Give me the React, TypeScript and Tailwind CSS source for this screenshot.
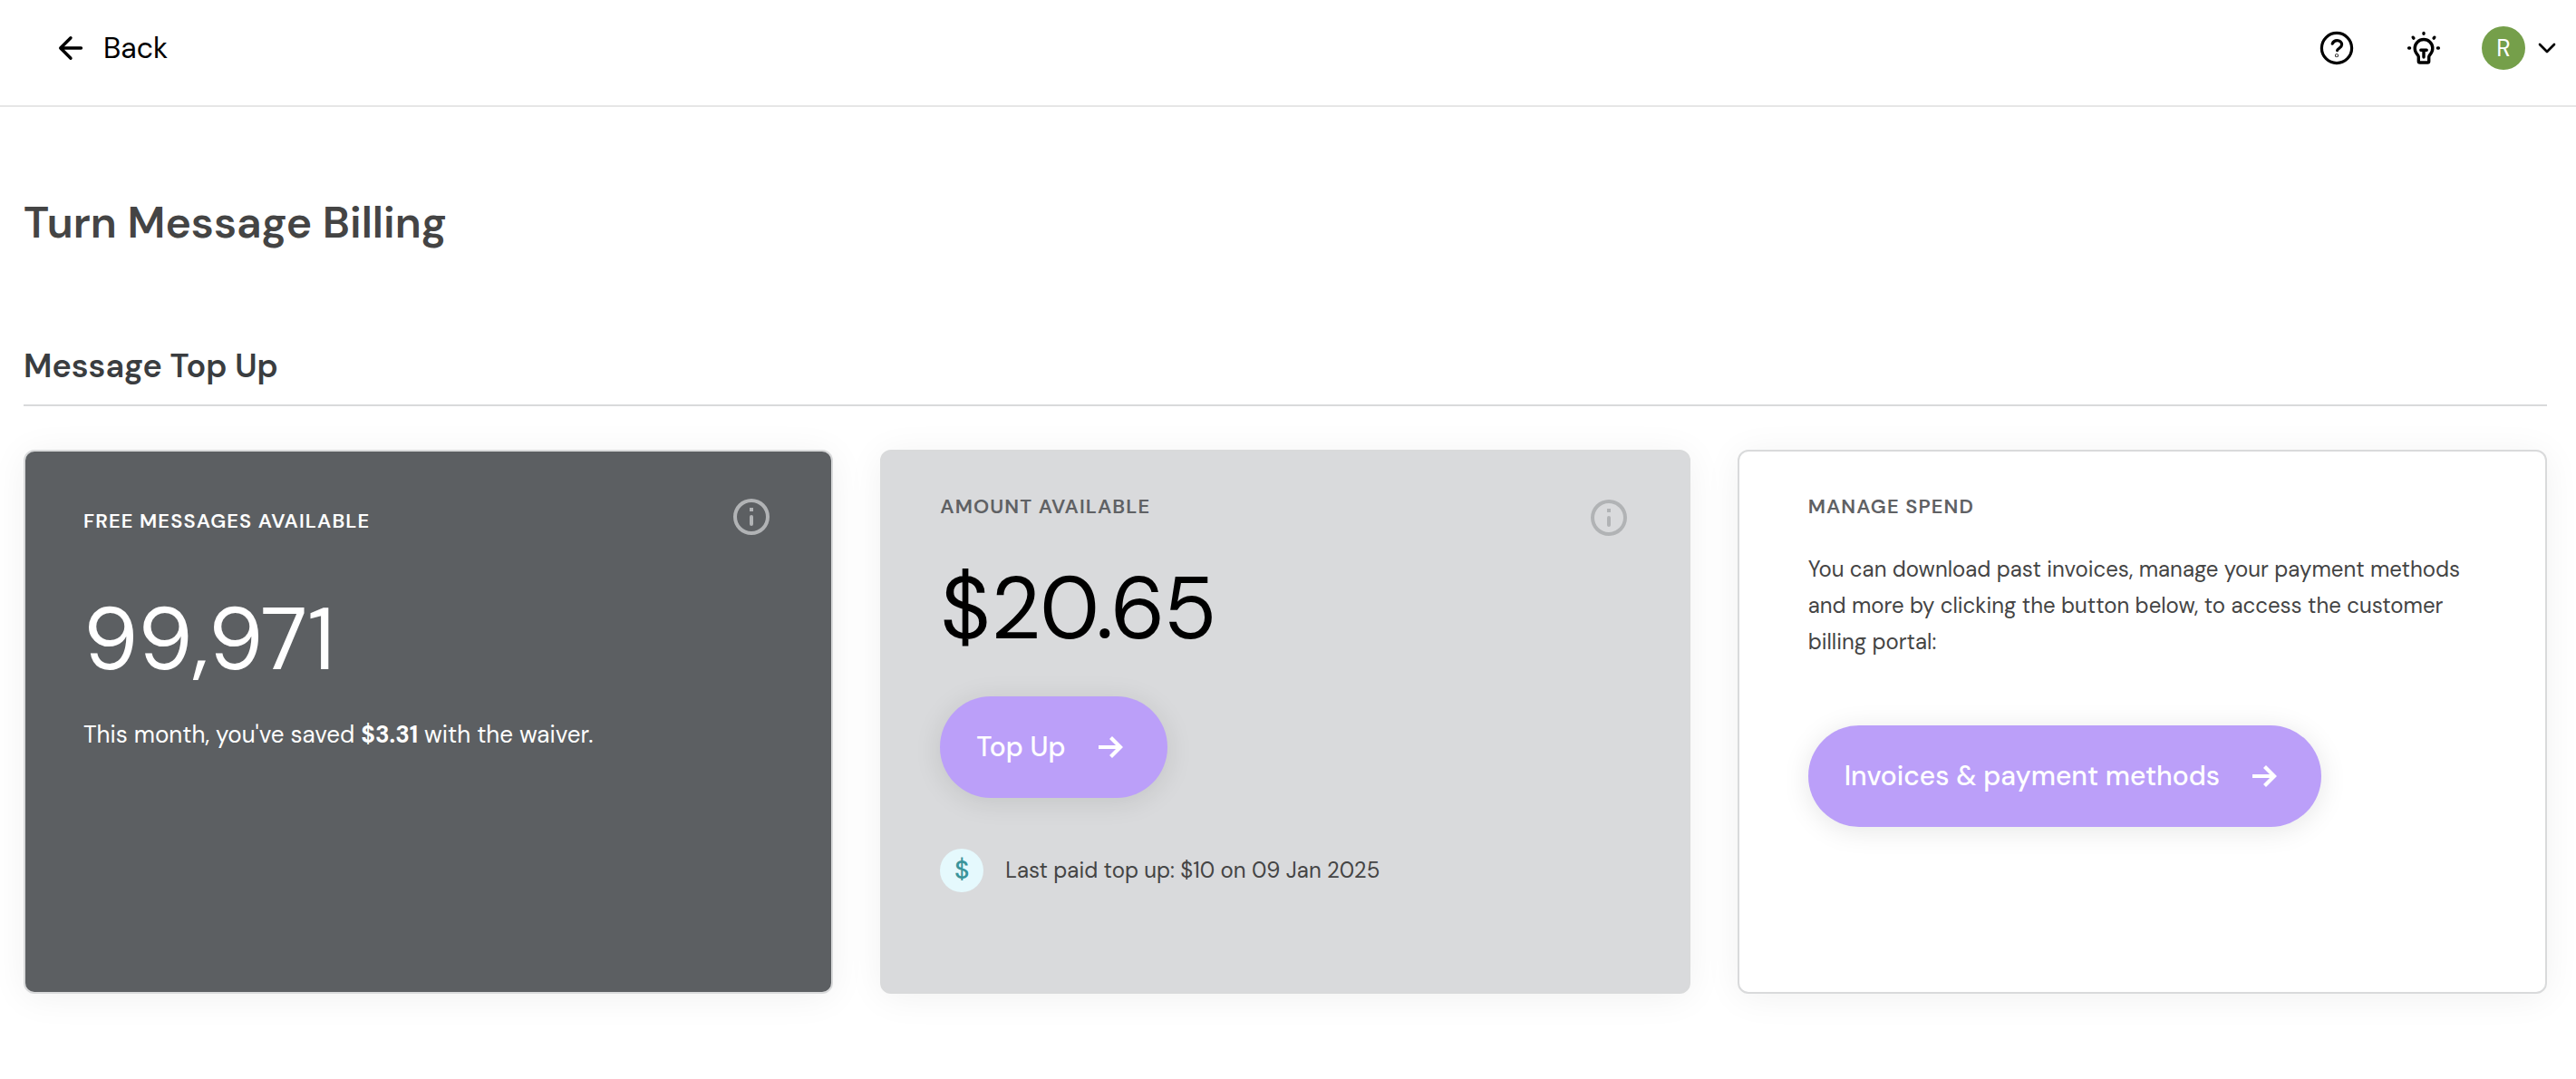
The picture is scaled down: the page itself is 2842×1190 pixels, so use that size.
import { ReactNode } from "react";
import { ChevronDown } from "lucide-react";

function BackIcon() {
  return (
    <svg viewBox="0 0 40 40" className="size-10" fill="none" stroke="currentColor" strokeWidth="3.4" strokeLinecap="round" strokeLinejoin="round">
      <path d="M31.500 20H9M20 8.700 8.700 20 20 31.300" />
    </svg>
  );
}

function HelpIcon() {
  return (
    <svg viewBox="0 0 40 40" className="size-10" fill="none" stroke="currentColor" strokeWidth="3.2" strokeLinecap="round" strokeLinejoin="round">
      <circle cx="20" cy="20" r="16.6" />
      <path d="M15.200 15.200c.9-2.400 2.800-3.600 5.200-3.600 3 0 5.200 2 5.200 4.700 0 3.400-4.600 4-5 6.300" />
      <circle cx="20" cy="28.200" r=".4" />
    </svg>
  );
}

function BulbIcon() {
  return (
    <svg viewBox="0 0 40 40" className="size-10" fill="none" stroke="currentColor" strokeWidth="3.4" strokeLinecap="round" strokeLinejoin="round">
      <path d="M14.300 34.500v-4.700c0-1.200-.7-1.900-1.600-3A9.800 9.800 0 1 1 27.300 26.800c-.9 1.100-1.600 1.800-1.600 3v4.700c0 1-.5 1.500-1.500 1.500h-8.400c-1 0-1.500-.5-1.500-1.500Z" />
      <path d="M16.800 22.300h6.400M20 22.300v7.700" />
      <path d="M20 3.500v.8M8.200 8.200l.7.900M31.800 8.200l-.7.900M3.600 20h1M36.400 20h-1" />
    </svg>
  );
}

function InfoIcon() {
  return (
    <svg viewBox="0 0 24 24" className="size-12" fill="currentColor">
      <path d="M12 2a10 10 0 1 0 0 20 10 10 0 0 0 0-20Zm0 18a8 8 0 1 1 0-16 8 8 0 0 1 0 16Z" />
      <path d="M11 7h2v2h-2z" />
      <rect x="11" y="11" width="2" height="6" rx="1" />
    </svg>
  );
}

function ArrowIcon() {
  return (
    <svg viewBox="0 0 28 24" className="h-6 w-7" fill="none" stroke="currentColor" strokeWidth="4.2">
      <path d="M0 12h24M13.500 1.500 24 12 13.500 22.500" />
    </svg>
  );
}

function Card({ className, children }: { className: string; children: ReactNode }) {
  return (
    <section className={`min-h-[600px] rounded-xl border-2 border-[#d9dadb] shadow-[0_4px_40px_rgba(0,0,0,0.06)] ${className}`}>
      {children}
    </section>
  );
}

function PillButton({ children }: { children: ReactNode }) {
  return (
    <button className="flex h-28 items-center gap-9 rounded-full bg-[#bb9ff9] pr-12 pl-10 text-[30px] leading-10 font-medium text-white shadow-[0_4px_30px_rgba(0,20,0,0.1)]">
      {children}
      <ArrowIcon />
    </button>
  );
}

export default function App() {
  return (
    <div className="min-h-screen bg-white font-['DM_Sans','Inter',sans-serif] text-[#444444]">
      <header className="flex items-center justify-between border-b-2 border-[#e6e6e6] pt-[29px] pr-4 pb-[39px] pl-[58px] text-black">
        <a href="#" className="flex items-center gap-4 text-[32px] leading-10">
          <BackIcon />
          Back
        </a>
        <div className="flex items-center">
          <button aria-label="Help" className="mr-14">
            <HelpIcon />
          </button>
          <button aria-label="Tips" className="mr-11">
            <BulbIcon />
          </button>
          <button aria-label="Account" className="flex items-center gap-2">
            <span className="flex size-12 items-center justify-center rounded-full bg-[#759f4a] text-[26px] text-white">R</span>
            <ChevronDown className="size-8" strokeWidth={2} />
          </button>
        </div>
      </header>

      <main className="pr-8 pb-12 pl-[26px]">
        <h1 className="pt-24 text-[48px] leading-[64px] font-semibold">Turn Message Billing</h1>

        <h2 className="mt-[102px] border-b-2 border-[#d9dadb] pb-[18px] text-[36px] leading-[48px] font-semibold text-[#3a3d40]">Message Top Up</h2>

        <div className="mt-12 grid grid-cols-3 gap-[52px]">
          <Card className="bg-[#5c5f62] px-16 pt-12 text-white">
            <div className="flex items-center justify-between">
              <h3 className="pt-2.5 text-[22px] leading-8 font-semibold tracking-wider">FREE MESSAGES AVAILABLE</h3>
              <button aria-label="About free messages" className="text-[#b1b3b5]">
                <InfoIcon />
              </button>
            </div>
            <p className="mt-[52px] text-[96px] leading-[120px]">99,971</p>
            <p className="mt-6 text-[26px] leading-10">
              This month, you've saved <strong className="font-bold">$3.31</strong> with the waiver.
            </p>
          </Card>

          <Card className="bg-[#d9dadc] px-16 pt-[45px]">
            <div className="flex justify-between">
              <h3 className="text-[22px] leading-8 font-semibold tracking-wider text-[#5f6164]">AMOUNT AVAILABLE</h3>
              <button aria-label="About the amount" className="mt-1 text-[#b1b3b5]">
                <InfoIcon />
              </button>
            </div>
            <p className="mt-[17px] mb-9 text-[96px] leading-[120px] text-black">$20.65</p>
            <PillButton>Top Up</PillButton>
            <div className="mt-14 flex items-center gap-6">
              <span className="flex size-12 items-center justify-center rounded-full bg-[#e5f9fd] text-[28px] font-medium text-[#3a949a]">$</span>
              <p className="text-[24px] leading-10">Last paid top up: $10 on 09 Jan 2025</p>
            </div>
          </Card>

          <Card className="bg-white px-[76px] pt-[45px]">
            <h3 className="text-[22px] leading-8 font-semibold tracking-wider text-[#5f6164]">MANAGE SPEND</h3>
            <p className="mt-[33px] mb-[72px] text-[24px] leading-10">
              You can download past invoices, manage your payment methods and more by clicking the button below, to access the customer billing portal:
            </p>
            <PillButton>Invoices &amp; payment methods</PillButton>
          </Card>
        </div>
      </main>
    </div>
  );
}
